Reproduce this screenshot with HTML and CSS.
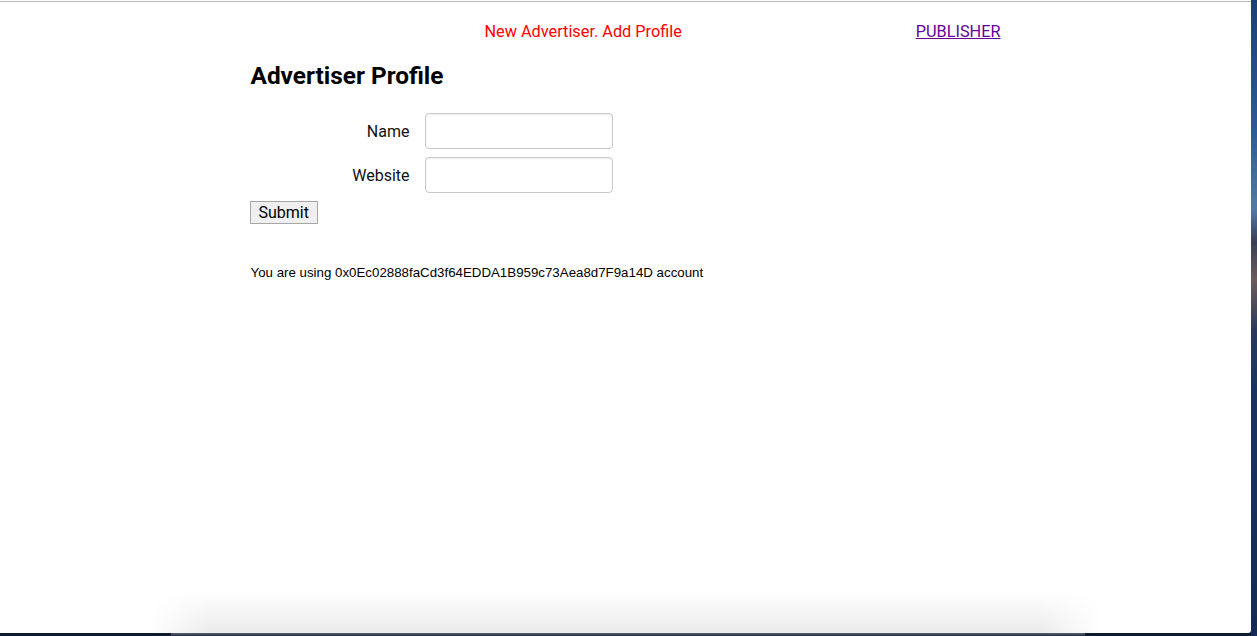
FILE: index.html
```html
<!DOCTYPE html>
<html lang="en">
<head>
<meta charset="utf-8">
<title>Advertiser Profile</title>
<link rel="stylesheet" href="styles.css">
</head>
<body>
<div class="screen">
  <div class="window">
    <div class="container">
      <header class="topbar">
        <span class="spacer"></span>
        <span class="notice">New Advertiser. Add Profile</span>
        <a class="publisher" href="#">PUBLISHER</a>
      </header>
      <h2 class="title">Advertiser Profile</h2>
      <form class="profile-form">
        <div class="field">
          <label class="field-label" for="name">Name</label>
          <input class="field-input" id="name" type="text">
        </div>
        <div class="field">
          <label class="field-label" for="website">Website</label>
          <input class="field-input" id="website" type="text">
        </div>
        <button class="submit" type="button">Submit</button>
      </form>
      <p class="account">You are using 0x0Ec02888faCd3f64EDDA1B959c73Aea8d7F9a14D account</p>
    </div>
    <div class="bottom-shadow"></div>
  </div>
  <div class="desk-right"></div>
  <div class="desk-bottom"><div class="dock-edge"></div></div>
</div>
</body>
</html>
```

FILE: styles.css
```css
html, body {
  margin: 0;
  padding: 0;
  width: 1257px;
  height: 636px;
  overflow: hidden;
  background: #0f2340;
  font-family: Roboto, "Liberation Sans", Arial, sans-serif;
}

.screen {
  position: relative;
  width: 1257px;
  height: 636px;
  display: grid;
  grid-template-columns: 1251px 6px;
  grid-template-rows: 633px 3px;
}

.window {
  position: relative;
  background: linear-gradient(to bottom, #fff 0, #fff 1px, #b9b9b9 1px, #b9b9b9 2px, #fff 2px);
  overflow: hidden;
  border-bottom-right-radius: 3px;
}

.container {
  width: 750px;
  margin: 0 auto;
  padding-top: 21px;
}

.topbar {
  display: flex;
  justify-content: space-between;
  align-items: center;
  font-size: 16.3px;
  line-height: 22px;
  height: 22px;
}

.spacer {
  width: 0;
}

.notice {
  color: #ff0000;
}

.publisher {
  color: #660099;
  text-decoration: underline;
}

.title {
  margin: 17px 0 0 0;
  font-size: 24.4px;
  line-height: 32px;
  font-weight: bold;
  color: #000;
}

.profile-form {
  margin-top: 21px;
  display: flex;
  flex-direction: column;
  align-items: flex-start;
  gap: 8px;
}

.field {
  display: flex;
  align-items: center;
  gap: 15px;
}

.field-label {
  width: 159px;
  text-align: right;
  font-size: 16px;
  color: #111;
}

.field-input {
  width: 188px;
  height: 36px;
  box-sizing: border-box;
  margin: 0;
  border: 1px solid #c9c9c9;
  border-radius: 4px;
  box-shadow: inset 0 1px 2px rgba(0, 0, 0, 0.08);
  background: #fff;
  font-size: 16px;
  padding: 4px 8px;
}

.submit {
  margin: 0 0 0 -1px;
  height: 23px;
  padding: 0 8px;
  font-family: Roboto, "Liberation Sans", Arial, sans-serif;
  font-size: 16px;
  color: #000;
  background: #efefef;
  border: 1px solid #a6a6a6;
  border-radius: 0;
}

.account {
  margin: 41px 0 0 0;
  font-family: "Liberation Sans", Arial, sans-serif;
  font-size: 13.3px;
  line-height: 16px;
  color: #000;
}

.bottom-shadow {
  position: absolute;
  left: 150px;
  right: 150px;
  bottom: 0;
  height: 42px;
  background: linear-gradient(to bottom, rgba(0, 0, 0, 0), rgba(0, 0, 0, 0.08));
  -webkit-mask-image: linear-gradient(to right, transparent, #000 60px, #000 calc(100% - 60px), transparent);
  mask-image: linear-gradient(to right, transparent, #000 60px, #000 calc(100% - 60px), transparent);
}

.desk-right {
  grid-row: 1 / 3;
  grid-column: 2;
  background: linear-gradient(to bottom, #1c3f7a 0%, #2a5a98 20%, #5478a8 33%, #3a3f55 38%, #6a5a5c 44%, #2b3a5a 52%, #1b3262 62%, #162a55 100%);
}

.desk-bottom {
  grid-column: 1;
  grid-row: 2;
  background: #0d1b33;
  position: relative;
}

.dock-edge {
  position: absolute;
  left: 171px;
  width: 914px;
  top: 0;
  height: 3px;
  background: linear-gradient(to bottom, #5d6676, #1d2a40);
}
```
